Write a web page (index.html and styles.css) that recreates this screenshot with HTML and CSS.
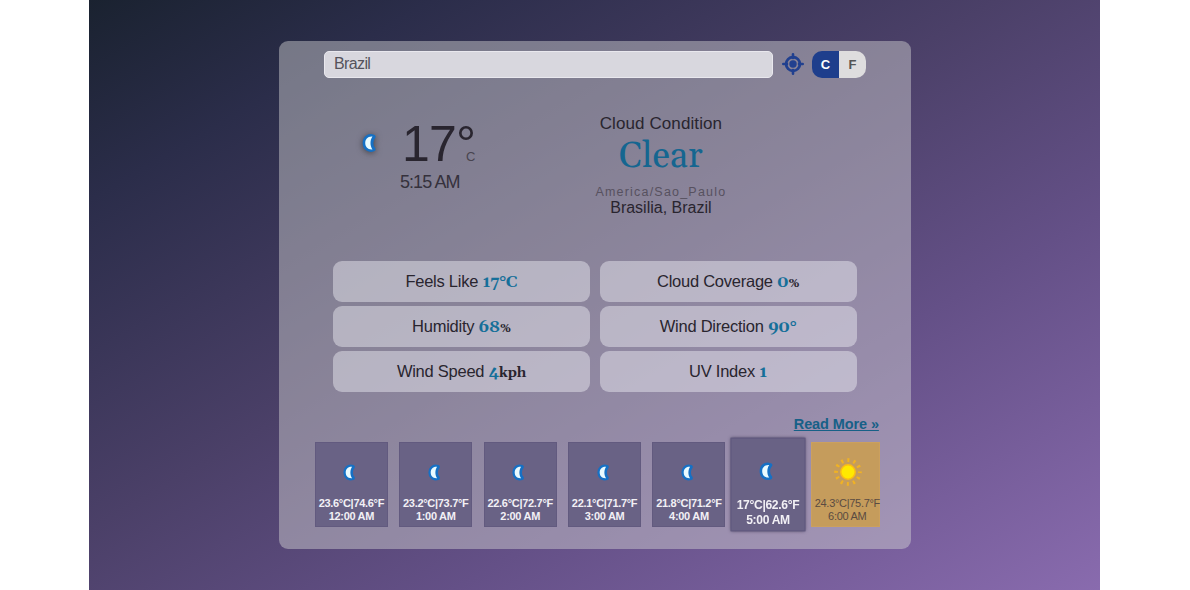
FILE: index.html
```
<!DOCTYPE html>
<html lang="en">
<head>
<meta charset="utf-8">
<title>Weather</title>
<link rel="stylesheet" href="styles.css">
</head>
<body>
<svg class="defs" width="0" height="0" aria-hidden="true">
  <symbol id="moon" viewBox="0 0 16 18">
    <path d="M11.300 3.700C6.600 2.300 4 5.200 4 9s2.600 6.700 7.300 5.300C8.800 11.500 8.800 6.500 11.300 3.700Z" fill="none" stroke="#1670c4" stroke-width="3.600" stroke-linejoin="round"/>
    <path d="M10.500 3.600C6.500 3.200 4.400 5.900 4.400 9s2.100 5.800 6.100 5.400C8.300 11.500 8.300 6.500 10.500 3.600Z" fill="#e9fbff"/>
  </symbol>
</svg>
<div class="page">
  <main class="panel">
    <header class="top">
      <input class="search" type="text" value="Brazil">
      <svg class="locate" viewBox="0 0 22 22"><g fill="none" stroke="#21408f"><circle cx="11" cy="11" r="6.900" stroke-width="2.800"/><path d="M11 1.300V5M11 17v3.700M1.300 11H5M17 11h3.700" stroke-width="2.600" stroke-linecap="round"/></g><circle cx="11" cy="11" r="3.700" fill="#21408f"/></svg>
      <div class="toggle"><span class="unit on">C</span><span class="unit">F</span></div>
    </header>
    <section class="now">
      <svg class="nowicon"><use href="#moon"/></svg>
      <div class="reading">
        <div class="temp"><span>17°</span><span class="scale">C</span></div>
        <div class="time">5:15 AM</div>
      </div>
      <div class="condition">
        <div class="label">Cloud Condition</div>
        <div class="sky">Clear</div>
        <div class="zone">America/Sao_Paulo</div>
        <div class="city">Brasilia, Brazil</div>
      </div>
    </section>
    <section class="stats">
      <div class="stat">Feels Like <b>17°C</b></div>
      <div class="stat">Cloud Coverage <b>0</b><small>%</small></div>
      <div class="stat">Humidity <b>68</b><small>%</small></div>
      <div class="stat">Wind Direction <b>90°</b></div>
      <div class="stat">Wind Speed <b>4</b><small class="kph">kph</small></div>
      <div class="stat">UV Index <b>1</b></div>
    </section>
    <a class="more" href="#">Read More »</a>
    <section class="hours">
      <div class="hour"><svg class="icon"><use href="#moon"/></svg><span>23.6°C|74.6°F</span><span>12:00 AM</span></div>
      <div class="hour"><svg class="icon"><use href="#moon"/></svg><span>23.2°C|73.7°F</span><span>1:00 AM</span></div>
      <div class="hour"><svg class="icon"><use href="#moon"/></svg><span>22.6°C|72.7°F</span><span>2:00 AM</span></div>
      <div class="hour"><svg class="icon"><use href="#moon"/></svg><span>22.1°C|71.7°F</span><span>3:00 AM</span></div>
      <div class="hour"><svg class="icon"><use href="#moon"/></svg><span>21.8°C|71.2°F</span><span>4:00 AM</span></div>
      <div class="hour current"><svg class="icon"><use href="#moon"/></svg><span>17°C|62.6°F</span><span>5:00 AM</span></div>
      <div class="hour day"><svg class="sun" viewBox="-15 -15 30 30"><circle r="11.900" fill="none" stroke="#f0b224" stroke-width="3.800" stroke-dasharray="2.100 4.131" stroke-dashoffset="1.050"/><circle r="7.200" fill="#ffe900" stroke="#fbbd14" stroke-width="1.500"/></svg><span>24.3°C|75.7°F</span><span>6:00 AM</span></div>
    </section>
  </main>
</div>
</body>
</html>
```
FILE: styles.css
```
* { box-sizing: border-box; }
body { margin: 0; background: #fff; font-family: "Liberation Sans", Arial, sans-serif; color: #29252f; }
.defs { position: absolute; }
.page {
  width: 1011px; height: 590px; margin-left: 89.4px; padding-top: 41.4px; overflow: hidden;
  background: linear-gradient(to right bottom, #1a2230, #2b2d4a 17%, #4b4068 45%, #645087 68%, #896bae);
}
.panel {
  width: 632px; height: 508px; margin: 0 auto; padding: 9.200px 31px 0 36px;
  border-radius: 9px; background: rgba(212, 212, 212, 0.46);
}
.top { display: flex; align-items: center; height: 27px; padding-left: 9px; }
.search {
  width: 449px; height: 27px; padding: 0 9px; border: 1px solid #e9e8ee; border-radius: 5px;
  background: #d8d7de; color: #55535b; font: 16px "Liberation Sans", sans-serif; letter-spacing: -0.600px;
}
.locate { width: 22px; height: 22px; margin: 0 8px 1px 9px; }
.toggle { display: flex; width: 54px; height: 27px; border-radius: 10px; overflow: hidden; }
.unit { flex: 1; background: #deddde; color: #555; font-size: 13px; font-weight: bold; line-height: 28px; text-align: center; }
.unit.on { background: #1e3e8c; color: #fff; }
.now { display: flex; height: 183.500px; padding: 34px 0 0 45px; }
.nowicon { width: 19px; height: 22px; margin-top: 20px; filter: drop-shadow(0 1px 3px #222a); }
.reading { width: 90px; margin-left: 21px; padding-top: 5px; }
.temp { display: flex; align-items: flex-end; height: 54px; margin-left: 2px; font-size: 50px; line-height: 54px; letter-spacing: -0.700px; white-space: nowrap; }
.scale { margin: 0 0 8px -9.500px; font-size: 13px; line-height: 13px; letter-spacing: 0; color: #48444f; }
.time { font-size: 18px; line-height: 22px; letter-spacing: -0.9px; color: #35313c; }
.condition { width: 160px; margin-left: 91px; text-align: center; }
.label { font-size: 17px; line-height: 23px; letter-spacing: 0.1px; }
.sky { height: 40px; font: 36px/44px Georgia, Gelasio, "Liberation Serif", serif; color: #156690; }
.zone { margin-top: 10px; font-size: 12.5px; line-height: 14px; letter-spacing: 1.2px; color: #57515f; white-space: nowrap; }
.city { font-size: 16px; line-height: 18px; }
.stats { display: grid; grid-template-columns: 257px 257px; grid-auto-rows: 40.500px; gap: 4.600px 9.700px; padding-left: 18px; }
.stat { border-radius: 9px; background: rgba(238, 238, 244, 0.46); font-size: 16.5px; line-height: 40px; text-align: center; letter-spacing: -0.25px; }
.stat b { font-family: Georgia, Gelasio, "Liberation Serif", serif; color: #156f99; }
.stat small { font: bold 12.5px Georgia, Gelasio, "Liberation Serif", serif; }
.stat .kph { font-size: 14px; }
.more { display: block; margin: 23px 1px 0 auto; width: max-content; font-size: 14.5px; font-weight: bold; line-height: 19px; letter-spacing: -0.1px; color: #176087; }
.hours { display: flex; gap: 11.400px; margin-top: 8.200px; width: 565px; height: 100px; }
.hour {
  flex: 0 0 73px; min-width: 0; display: flex; flex-direction: column; align-items: center; height: 85px; padding-top: 20px;
  border: 1px solid #625a7f; background: #696285; color: #f2f0f5; font-size: 11px; line-height: 13px; font-weight: bold; letter-spacing: -0.3px; white-space: nowrap;
}
.icon { width: 17px; height: 19px; margin: 0 3px 15px 0; }
.current { flex-basis: 68px; transform: scale(1.1); box-shadow: 0 0 3px #443c59; margin-left: -2.500px; }
.day { flex-basis: 69.500px; background: #c59c5c; border-color: #cba05e; color: #5a4b42; font-weight: normal; padding: 14px 0 0 3px; margin-left: -3px; letter-spacing: -0.3px; align-items: flex-start; }
.day span { width: 65px; text-align: center; }
.sun { width: 30px; height: 30px; margin: 0 0 10px 18px; flex: none; }
```
